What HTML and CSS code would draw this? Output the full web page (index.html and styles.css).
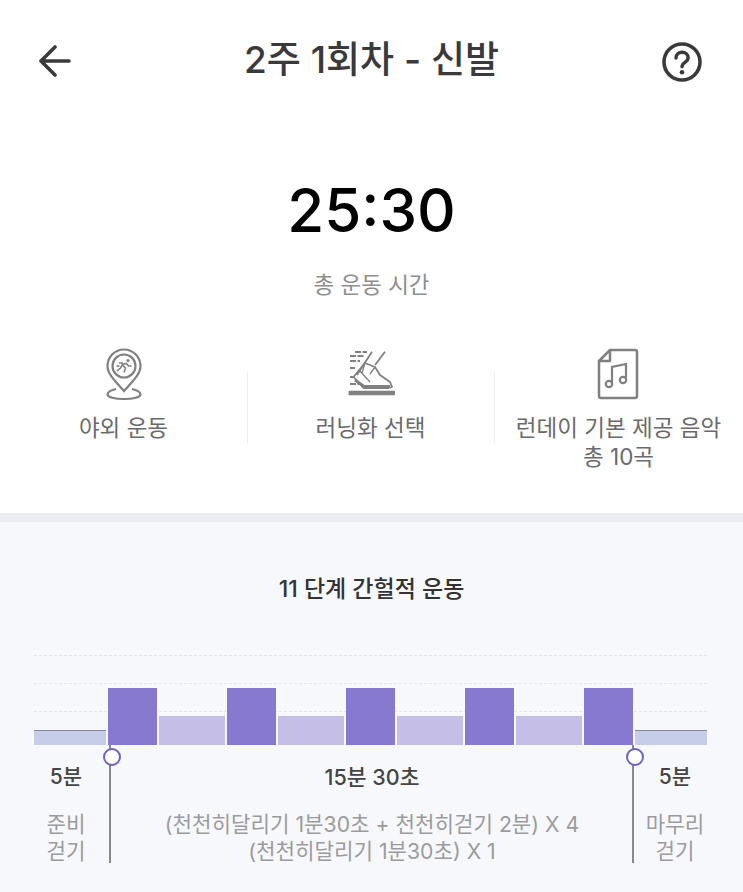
FILE: index.html
```html
<!DOCTYPE html>
<html lang="ko">
<head>
<meta charset="utf-8">
<title>2주 1회차 - 신발</title>
<link rel="stylesheet" href="styles.css">
</head>
<body>
<main class="page">
  <header class="topbar">
    <svg class="icon-back" viewBox="0 0 34 32" width="34" height="32"><path d="M31 16H3M17 2 3 16l14 14" fill="none" stroke="#3a3a3c" stroke-width="3.6" stroke-linecap="round" stroke-linejoin="round"/></svg>
    <h1 class="title">2주 1회차 - 신발</h1>
    <svg class="icon-help" viewBox="0 0 40 40" width="40" height="40"><circle cx="20" cy="20" r="18" fill="none" stroke="#3a3a3c" stroke-width="3.6"/><path d="M14 16c0-3.500 2.700-5.800 6.100-5.800s6 2.200 6 5.400c0 2.400-1.300 3.600-3.100 4.800-1.900 1.200-3 2.200-3 4.400" fill="none" stroke="#3a3a3c" stroke-width="3.400" stroke-linecap="round"/><circle cx="20" cy="30.200" r="2.300" fill="#3a3a3c"/></svg>
  </header>

  <section class="summary">
    <div class="time">25:30</div>
    <div class="time-label">총 운동 시간</div>
  </section>

  <section class="options">
    <div class="option">
      <svg class="option-icon" viewBox="0 0 50 54" width="50" height="54">
        <g fill="none" stroke="#808080" stroke-width="2.200">
          <path d="M25 44C16 34 8.500 27 8.500 19a16.500 16.500 0 0 1 33 0C41.500 27 34 34 25 44Z"/>
          <circle cx="25" cy="19" r="11.500"/>
          <path d="M17 42c-6 1.500-8.500 3.500-8.500 5.500 0 2.500 7 4.500 16.500 4.500s16.500-2 16.500-4.500c0-2-2.500-4-8.500-5.500"/>
          <path d="M18 24l3.500-3 2-3.500 4-1 2 2.500h3M23.500 18l3 3-1.500 4.500M20 16h4M17.500 19h3" stroke-width="1.600"/>
        </g>
        <circle cx="29" cy="13.500" r="1.600" fill="#808080"/>
      </svg>
      <div class="option-label">야외 운동</div>
    </div>
    <div class="option option-divided">
      <svg class="option-icon" viewBox="0 0 50 54" width="50" height="54">
        <g fill="none" stroke="#808080" stroke-linejoin="round">
          <path d="M26 4.700 11 28M39 4.700 29 18" stroke-width="1.800"/>
          <path d="M19 16 29 20 34 28 44 35 46 40 42.500 41H17.500L7.500 30Z" stroke-width="1.800"/>
          <path d="M9 33 18 39.500H44" stroke-width="3"/>
          <path d="M19 16 16 26M29 20 24 27M13 23 24 35" stroke-width="1.300"/>
          <path d="M9 5h12M4 9h15M4 14h10M4 21h5M4 30h3M4 37h10" stroke-width="1.800" stroke-dasharray="6 1.500"/>
        </g>
        <rect x="2.500" y="43.700" width="46.500" height="4.600" rx="1" fill="#808080"/>
      </svg>
      <div class="option-label">러닝화 선택</div>
    </div>
    <div class="option option-divided">
      <svg class="option-icon" viewBox="0 0 50 54" width="50" height="54">
        <path d="M16 3H41a2 2 0 0 1 2 2V49a2 2 0 0 1-2 2H7a2 2 0 0 1-2-2V14ZM16 3V14H5" fill="none" stroke="#808080" stroke-width="2.500" stroke-linejoin="round"/>
        <g fill="none" stroke="#808080" stroke-width="2.200">
          <path d="M18 36V20l14-3v15"/>
          <circle cx="15" cy="37" r="3.200"/>
          <circle cx="29" cy="33" r="3.200"/>
        </g>
      </svg>
      <div class="option-label">런데이 기본 제공 음악<br>총 10곡</div>
    </div>
  </section>

  <section class="plan">
    <h2 class="plan-title">11 단계 간헐적 운동</h2>
    <div class="chart">
      <div class="gridlines">
        <div class="gridline"></div>
        <div class="gridline"></div>
        <div class="gridline"></div>
      </div>
      <div class="bars">
        <div class="bar bar-warm"></div>
        <div class="bar bar-run"></div>
        <div class="bar bar-walk"></div>
        <div class="bar bar-run"></div>
        <div class="bar bar-walk"></div>
        <div class="bar bar-run"></div>
        <div class="bar bar-walk"></div>
        <div class="bar bar-run"></div>
        <div class="bar bar-walk"></div>
        <div class="bar bar-run"></div>
        <div class="bar bar-warm"></div>
      </div>
    </div>
    <div class="phases">
      <div class="phase phase-start">
        <div class="phase-time">5분</div>
        <div class="phase-desc">준비<br>걷기</div>
      </div>
      <div class="marker"></div>
      <div class="phase phase-main">
        <div class="phase-time">15분 30초</div>
        <div class="phase-desc">(천천히달리기 1분30초 + 천천히걷기 2분) X 4<br>(천천히달리기 1분30초) X 1</div>
      </div>
      <div class="marker"></div>
      <div class="phase phase-end">
        <div class="phase-time">5분</div>
        <div class="phase-desc">마무리<br>걷기</div>
      </div>
    </div>
  </section>
</main>
</body>
</html>
```
FILE: styles.css
```css
* { box-sizing: border-box; }
html, body { margin: 0; padding: 0; }
body {
  width: 743px;
  height: 892px;
  overflow: hidden;
  background: #fff;
  font-family: "Inter", "Noto Sans CJK KR", sans-serif;
  color: #333;
}
.page { display: flex; flex-direction: column; height: 892px; }

.topbar {
  display: flex;
  align-items: center;
  justify-content: space-between;
  padding: 40px 41px 0 38px;
  height: 82px;
}
.title {
  margin: -3px 0 0 9px;
  font-size: 37px;
  line-height: 42px;
  font-weight: 500;
  color: #3a3a3c;
}
.icon-help { margin-top: 2px; }

.summary { text-align: center; padding-top: 91px; }
.time {
  font-family: "Inter", sans-serif;
  font-size: 60px;
  line-height: 74px;
  font-weight: 500;
  color: #000;
}
.time-label {
  margin-top: 22px;
  font-size: 22.500px;
  line-height: 32px;
  color: #8e8e90;
}

.options {
  display: grid;
  grid-template-columns: 247px 247px 249px;
  padding-top: 46px;
  height: 212px;
}
.option { display: flex; flex-direction: column; align-items: center; text-align: center; position: relative; }
.option-divided::before {
  content: "";
  position: absolute;
  left: 0;
  top: 25px;
  height: 71px;
  width: 1px;
  background: #eeeeef;
}
.option-icon { display: block; margin-bottom: 12px; }
.option-label { font-size: 22.500px; line-height: 29px; color: #6a6a6c; }

.plan {
  flex: 1;
  background: #f7f8fc;
  border-top: 9px solid #eceDf0;
}
.plan-title {
  margin: 0;
  padding-top: 51px;
  text-align: center;
  font-size: 23px;
  line-height: 32px;
  font-weight: 500;
  color: #333;
}

.chart { position: relative; margin: 50px 36px 0 34px; height: 90px; }
.gridlines {
  position: absolute;
  inset: 0;
  display: flex;
  flex-direction: column;
  gap: 27px;
}
.gridline { border-top: 1px dashed #e6e6ea; height: 1px; }
.bars {
  position: absolute;
  inset: 0;
  display: grid;
  grid-template-columns: 72fr 49fr 66fr 49fr 66fr 49fr 66fr 49fr 66fr 49fr 72fr;
  column-gap: 2px;
  align-items: end;
}
.bar-warm { height: 15px; background: #c6cde9; border-top: 1px solid #85869f; }
.bar-run { height: 57px; background: #8679cf; }
.bar-walk { height: 29px; background: #c5bee6; }

.phases { display: grid; grid-template-columns: 77px 1px 522px 1px 1fr; padding-left: 33px; }
.phase { text-align: center; }
.phase-start { padding-right: 11px; }
.phase-end { padding-right: 27px; }
.phase-time { font-size: 21px; line-height: 30px; font-weight: 500; color: #444; margin-top: 17px; }
.phase-main .phase-time { font-size: 21.500px; }
.phase-desc { font-size: 21.200px; line-height: 27px; color: #9b9b9e; margin-top: 19px; }
.marker { position: relative; width: 2px; height: 118px; background: #88888c; margin-left: -1px; }
.marker::before {
  content: "";
  position: absolute;
  left: -6px;
  top: 3px;
  width: 14px;
  height: 14px;
  border-radius: 50%;
  border: 2.500px solid #6e5fc0;
  background: #fff;
}
```
